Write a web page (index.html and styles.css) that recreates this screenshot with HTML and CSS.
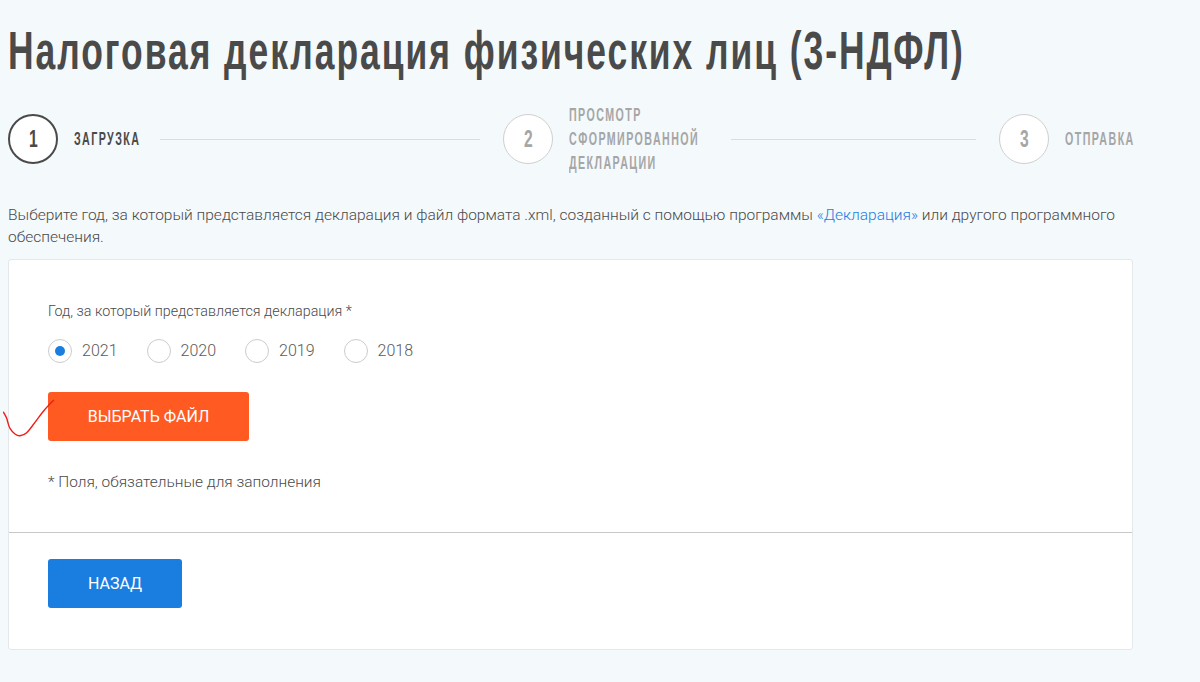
FILE: index.html
```html
<!DOCTYPE html>
<html lang="en">
<head>
    <meta charset="UTF-8">
    <title>Налоговая декларация</title>
    <link rel="stylesheet" href="styles.css">
</head>
<body>
    <div class="page">
        <h1>Налоговая декларация физических лиц (3-НДФЛ)</h1>

        <div class="steps">
            <div class="step active">
                <span class="step-num"><span>1</span></span>
                <span class="step-name name-one">Загрузка</span>
            </div>
            <div class="step-line line-one"></div>
            <div class="step">
                <span class="step-num"><span>2</span></span>
                <span class="step-name name-two">Просмотр<br>сформированной<br>декларации</span>
            </div>
            <div class="step-line line-two"></div>
            <div class="step">
                <span class="step-num"><span>3</span></span>
                <span class="step-name name-three">Отправка</span>
            </div>
        </div>

        <p class="intro">Выберите год, за который представляется декларация и файл формата .xml, созданный с помощью программы <a href="#">«Декларация»</a> или другого программного обеспечения.</p>

        <div class="card">
            <div class="card-top">
                <div class="field-label">Год, за который представляется декларация *</div>
                <div class="years">
                    <label class="year"><span class="radio checked"></span>2021</label>
                    <label class="year"><span class="radio"></span>2020</label>
                    <label class="year"><span class="radio"></span>2019</label>
                    <label class="year"><span class="radio"></span>2018</label>
                </div>
                <div class="file-row">
                    <button class="btn btn-orange">Выбрать файл</button>
                    <!-- red pen mark over the button edge -->
                    <svg class="pen-mark" width="60" height="42" viewBox="0 0 60 42">
                        <path d="M0.3 12.7 C1.5 15 2.8 17 3.7 19.3 C5 23 5.2 26.5 7 29.3 C8.5 31.8 10 33.5 12 35 C13.8 36.3 15.3 37 17 36.7 C19.5 36.3 21.8 35.5 23.7 33.7 C26 31.5 28 28.7 30 26 C33.5 21.5 36.5 17 40 12.7 C43.5 8.5 47 4.5 51 1" fill="none" stroke="#f01c1c" stroke-width="1.4"/>
                    </svg>
                </div>
                <div class="note">* Поля, обязательные для заполнения</div>
            </div>
            <div class="card-bottom">
                <button class="btn btn-blue">Назад</button>
            </div>
        </div>
    </div>
</body>
</html>
```

FILE: styles.css
```css
body {
    margin: 0;
    background-color: #f4f9fc;
    font-family: Roboto, "Liberation Sans", sans-serif;
    color: #4a4a4a;
    overflow: hidden;
}

.page {
    width: 1125px;
    height: 682px;
    margin-left: 8px;
}

/* no condensed face is installed, so the display text is squeezed */
h1 {
    margin: 0;
    padding-top: 20px;
    height: 86px;
    width: 1100px;
    box-sizing: border-box;
    font-family: "Liberation Sans", sans-serif;
    font-size: 54px;
    line-height: 60px;
    font-weight: 700;
    letter-spacing: 3px;
    white-space: nowrap;
    color: #4a4a4a;
    transform: scaleX(0.656);
    transform-origin: left;
}

.steps {
    display: flex;
    align-items: center;
    height: 84px;
    margin-top: 11px;
}

.step {
    display: flex;
    align-items: center;
    gap: 16px;
    flex-shrink: 0;
}

.step-num {
    width: 50px;
    height: 50px;
    box-sizing: border-box;
    display: flex;
    align-items: center;
    justify-content: center;
    border: 1px solid #cfcfcf;
    border-radius: 50%;
    background-color: #fff;
    font-family: "Liberation Sans", sans-serif;
    font-size: 23px;
    font-weight: 700;
    color: #a6a6a6;
}

.step-num span {
    transform: scaleX(0.68);
}

.step-name {
    font-family: "Liberation Sans", sans-serif;
    font-size: 18px;
    line-height: 24px;
    font-weight: 700;
    letter-spacing: 2.4px;
    text-transform: uppercase;
    white-space: nowrap;
    color: #a6a6a6;
    transform: scaleX(0.593);
    transform-origin: left;
}

.name-one { width: 67px; }
.name-two { width: 128px; }
.name-three { width: 68px; }

.step.active .step-num {
    border: 2px solid #4a4a4a;
    color: #4a4a4a;
}

.step.active .step-name {
    color: #4a4a4a;
}

.step-line {
    height: 1px;
    background-color: #d8dde0;
}

.line-one {
    width: 320px;
    margin: 0 23px 0 19px;
}

.line-two {
    width: 245px;
    margin: 0 23px 0 34px;
}

.intro {
    margin: 23px 0 0;
    font-size: 15.5px;
    line-height: 22px;
    font-weight: 300;
    color: #4a4a4a;
}

.intro a {
    color: #1a7ee0;
    text-decoration: none;
}

.card {
    width: 1125px;
    height: 391px;
    box-sizing: border-box;
    margin-top: 11px;
    background-color: #fff;
    border: 1px solid #e4e8ea;
    border-radius: 3px;
}

.card-top {
    height: 273px;
    box-sizing: border-box;
    padding: 43px 39px 0;
    border-bottom: 1px solid #c8c8c8;
}

.field-label {
    font-size: 14.3px;
    line-height: 16px;
    font-weight: 300;
    color: #4a4a4a;
}

.years {
    display: flex;
    gap: 29px;
    margin-top: 20px;
}

.year {
    display: flex;
    align-items: center;
    gap: 10px;
    font-size: 16px;
    font-weight: 300;
    line-height: 24px;
    color: #5a5a5a;
}

.radio {
    width: 24px;
    height: 24px;
    box-sizing: border-box;
    display: flex;
    align-items: center;
    justify-content: center;
    border: 1px solid #cccccc;
    border-radius: 50%;
}

.radio.checked::after {
    content: "";
    width: 10px;
    height: 10px;
    border-radius: 50%;
    background-color: #1a7ee0;
}

.file-row {
    position: relative;
    margin-top: 29px;
    height: 49px;
}

.pen-mark {
    position: absolute;
    left: -45px;
    top: 7px;
}

.btn {
    height: 49px;
    border: none;
    border-radius: 3px;
    font-family: Roboto, "Liberation Sans", sans-serif;
    font-size: 16px;
    color: #fff;
    text-transform: uppercase;
}

.btn-orange {
    width: 201px;
    background-color: #ff5a22;
}

.btn-blue {
    width: 134px;
    background-color: #1a7ee0;
}

.note {
    margin-top: 31px;
    font-size: 15.45px;
    line-height: 20px;
    font-weight: 300;
    color: #4a4a4a;
}

.card-bottom {
    padding: 26px 39px 0;
}
```
